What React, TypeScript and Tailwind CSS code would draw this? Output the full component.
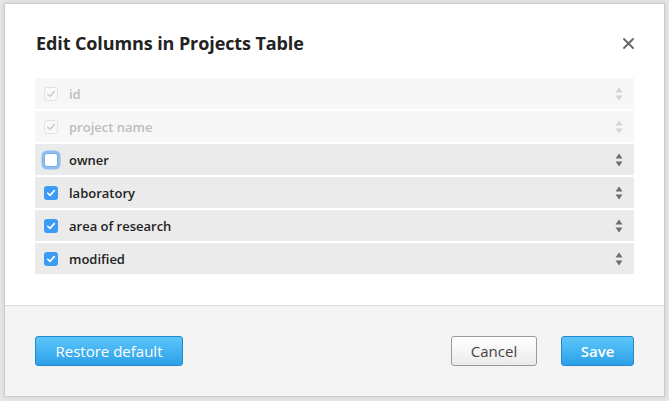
import React from 'react';

type Column = { name: string; checked: boolean; locked?: boolean; focused?: boolean };

const columns: Column[] = [
  { name: 'id', checked: true, locked: true },
  { name: 'project name', checked: true, locked: true },
  { name: 'owner', checked: false, focused: true },
  { name: 'laboratory', checked: true },
  { name: 'area of research', checked: true },
  { name: 'modified', checked: true },
];

const Check = ({ color }: { color: string }) => (
  <svg width="10" height="10" viewBox="0 0 10 10" fill="none">
    <path d="M1.8 5.2 L4 7.4 L8.3 2.6" stroke={color} strokeWidth="1.6" strokeLinecap="round" strokeLinejoin="round" />
  </svg>
);

const Checkbox = ({ col }: { col: Column }) => {
  if (col.locked) {
    return (
      <span className="flex h-[14px] w-[14px] items-center justify-center rounded-[3px] border border-[#e2e2e2] bg-[#f9f9f9]">
        <Check color="#cfcfcf" />
      </span>
    );
  }
  if (col.checked) {
    return (
      <span className="flex h-[14px] w-[14px] items-center justify-center rounded-[3px] bg-[#3c9bf5]">
        <Check color="#ffffff" />
      </span>
    );
  }
  return (
    <span className="h-[14px] w-[14px] rounded-[3px] border border-[#7fb2ea] bg-white shadow-[0_0_0_2.5px_#8dbcf2]" />
  );
};

const SortHandle = ({ faded }: { faded?: boolean }) => {
  const c = faded ? '#d4d4d4' : '#6e6e6e';
  return (
    <svg width="8" height="14" viewBox="0 0 8 14">
      <path d="M4 0.5 L7.5 5.5 L0.5 5.5 Z" fill={c} />
      <path d="M0.5 8.5 L7.5 8.5 L4 13.5 Z" fill={c} />
    </svg>
  );
};

export default function App() {
  return (
    <div
      className="h-[401px] w-[669px] bg-[#e6e6e6] pl-[4px] pt-[3px]"
      style={{ fontFamily: '"Open Sans", "Liberation Sans", sans-serif' }}
    >
      <div className="flex h-[394px] w-[661px] flex-col border border-[#cdcdcd] bg-white shadow-[0_0_4px_rgba(0,0,0,0.12)]">
        <div className="flex items-center justify-between pl-[31px] pr-[30px] pt-[27px]">
          <h1 className="text-[18px] font-bold leading-[24px] tracking-[-0.1px] text-[#222]">
            Edit Columns in Projects Table
          </h1>
          <svg width="11" height="11" viewBox="0 0 11 11">
            <path d="M1 1 L10 10 M10 1 L1 10" stroke="#666" strokeWidth="1.8" strokeLinecap="round" />
          </svg>
        </div>

        <div className="mt-[23px] flex flex-col gap-[2px] px-[30px]">
          {columns.map((col) => (
            <div
              key={col.name}
              className={`flex h-[31px] items-center pl-[9px] pr-[11px] ${
                col.locked ? 'bg-[#f7f7f7]' : 'bg-[#ebebeb]'
              }`}
            >
              <Checkbox col={col} />
              <span
                className={`ml-[11px] flex-1 pt-[2px] text-[13px] font-semibold ${
                  col.locked ? 'text-[#bdbdbd]' : 'text-[#222]'
                }`}
              >
                {col.name}
              </span>
              <SortHandle faded={col.locked} />
            </div>
          ))}
        </div>

        <div className="mt-[31px] border-t border-[#dcdcdc]" />

        <div className="flex flex-1 items-start bg-[#f4f4f4] px-[30px] pt-[30px]">
          <button className="h-[30px] w-[148px] rounded-[3px] border border-[#2489cf] bg-gradient-to-b from-[#5cc6fa] to-[#2aa0e8] text-[15px] text-white">
            Restore default
          </button>
          <div className="flex-1" />
          <button className="h-[30px] w-[86px] rounded-[3px] border border-[#9a9a9a] bg-gradient-to-b from-white to-[#ebebeb] text-[15px] text-[#444]">
            Cancel
          </button>
          <button className="ml-[24px] h-[30px] w-[73px] rounded-[3px] border border-[#2489cf] bg-gradient-to-b from-[#5cc6fa] to-[#2aa0e8] text-[15px] font-semibold text-white">
            Save
          </button>
        </div>
      </div>
    </div>
  );
}
